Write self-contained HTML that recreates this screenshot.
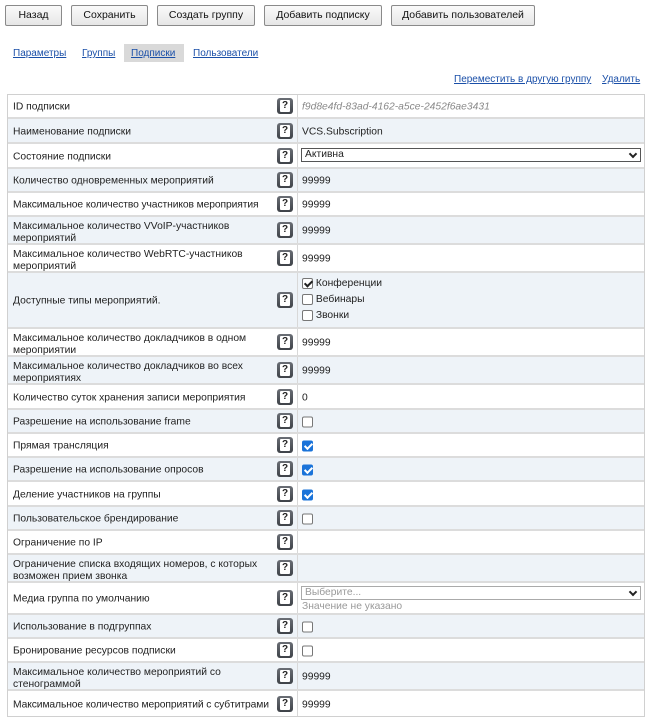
<!DOCTYPE html>
<html><head><meta charset="utf-8"><style>
*{box-sizing:border-box;margin:0;padding:0}
body{width:650px;height:723px;background:#fff;font-family:"Liberation Sans",sans-serif;font-size:10.3px;color:#222;position:relative;overflow:hidden}
.btn{position:absolute;top:5px;height:21px;border:1px solid #8a8a8a;border-radius:2px;background:linear-gradient(#fafafa,#e6e6e6);font-size:10.5px;text-align:center;line-height:19px;color:#111}
a{color:#1a4fa8;text-decoration:underline;position:absolute;font-size:10px}
.tab{top:48px}
.tbl{position:absolute;left:7px;top:94px;width:638px;border:1px solid #d0d0d0}
.r{position:relative;border-bottom:2px solid #dcdcdc}
.r:last-child{border-bottom:none}
.r.b{background:#eef3f8}
.l{position:absolute;left:5px;top:50%;transform:translateY(-38%);width:262px;line-height:12px;white-space:normal}
.q{position:absolute;left:269px;top:50%;margin-top:-8px;width:16px;height:16px;border-radius:3px;background:linear-gradient(#6a6e75,#3e4248);}
.q::after{content:"?";position:absolute;left:3px;top:2px;width:10px;height:12px;background:#fff;color:#222;font-weight:bold;font-size:10px;line-height:12px;text-align:center;border-radius:1px}
.d{position:absolute;left:289px;top:0;bottom:0;border-left:1px solid #d8d8d8}
.v{position:absolute;left:294px;top:50%;transform:translateY(-40%)}
.cb{display:inline-block;width:11px;height:11px;border:1px solid #777;border-radius:2px;background:#fff;vertical-align:middle;position:relative}
.cb.on{background:#1a73d9;border-color:#1a73d9}
.cb.on::after{content:"";position:absolute;left:3px;top:0px;width:3px;height:6px;border:solid #fff;border-width:0 2px 2px 0;transform:rotate(45deg)}
.cb.k::after{content:"";position:absolute;left:3px;top:0px;width:3px;height:6px;border:solid #222;border-width:0 2px 2px 0;transform:rotate(45deg)}
.sel{position:absolute;left:293px;width:340px;height:14px;border:1px solid #777;background:#fff;padding-left:3px;line-height:12px}
.sel::after{content:"";position:absolute;right:4px;top:2px;width:4px;height:4px;border:solid #222;border-width:0 2px 2px 0;transform:rotate(45deg)}
.nw{white-space:nowrap;letter-spacing:-0.1px}
</style></head><body>
<div class="btn" style="left:5px;width:57px">Назад</div>
<div class="btn" style="left:71px;width:77px">Сохранить</div>
<div class="btn" style="left:157px;width:98px">Создать группу</div>
<div class="btn" style="left:264px;width:118px">Добавить подписку</div>
<div class="btn" style="left:391px;width:144px">Добавить пользователей</div>
<div style="position:absolute;left:124px;top:44px;width:60px;height:18px;background:#d9d9d9"></div>
<a class="tab" style="left:13px">Параметры</a>
<a class="tab" style="left:82px">Группы</a>
<a class="tab" style="left:131px">Подписки</a>
<a class="tab" style="left:193px">Пользователи</a>
<a style="left:454px;top:74px">Переместить в другую группу</a>
<a style="left:602px;top:74px">Удалить</a>
<div class="tbl">
<div class="r" style="height:24px"><div class="l">ID подписки</div><div class="q"></div><div class="d"></div><div class="v" style="color:#888;font-style:italic">f9d8e4fd-83ad-4162-a5ce-2452f6ae3431</div></div>
<div class="r b" style="height:25px"><div class="l">Наименование подписки</div><div class="q"></div><div class="d"></div><div class="v">VCS.Subscription</div></div>
<div class="r" style="height:25px"><div class="l">Состояние подписки</div><div class="q"></div><div class="d"></div><div class="sel" style="top:4px;border-color:#555">Активна</div></div>
<div class="r b" style="height:24px"><div class="l">Количество одновременных мероприятий</div><div class="q"></div><div class="d"></div><div class="v">99999</div></div>
<div class="r" style="height:24px"><div class="l nw">Максимальное количество участников мероприятия</div><div class="q"></div><div class="d"></div><div class="v">99999</div></div>
<div class="r b" style="height:28px"><div class="l">Максимальное количество VVoIP-участников мероприятий</div><div class="q"></div><div class="d"></div><div class="v">99999</div></div>
<div class="r" style="height:28px"><div class="l">Максимальное количество WebRTC-участников мероприятий</div><div class="q"></div><div class="d"></div><div class="v">99999</div></div>
<div class="r b" style="height:56px"><div class="l">Доступные типы мероприятий.</div><div class="q"></div><div class="d"></div><div class="v" style="line-height:16px;transform:translateY(-50%)"><div><span class="cb k"></span> Конференции</div><div><span class="cb"></span> Вебинары</div><div><span class="cb"></span> Звонки</div></div></div>
<div class="r" style="height:28px"><div class="l">Максимальное количество докладчиков в одном мероприятии</div><div class="q"></div><div class="d"></div><div class="v">99999</div></div>
<div class="r b" style="height:28px"><div class="l">Максимальное количество докладчиков во всех мероприятиях</div><div class="q"></div><div class="d"></div><div class="v">99999</div></div>
<div class="r" style="height:25px"><div class="l">Количество суток хранения записи мероприятия</div><div class="q"></div><div class="d"></div><div class="v">0</div></div>
<div class="r b" style="height:24px"><div class="l">Разрешение на использование frame</div><div class="q"></div><div class="d"></div><div class="v"><span class="cb"></span></div></div>
<div class="r" style="height:24px"><div class="l">Прямая трансляция</div><div class="q"></div><div class="d"></div><div class="v"><span class="cb on"></span></div></div>
<div class="r b" style="height:24px"><div class="l">Разрешение на использование опросов</div><div class="q"></div><div class="d"></div><div class="v"><span class="cb on"></span></div></div>
<div class="r" style="height:25px"><div class="l">Деление участников на группы</div><div class="q"></div><div class="d"></div><div class="v"><span class="cb on"></span></div></div>
<div class="r b" style="height:24px"><div class="l">Пользовательское брендирование</div><div class="q"></div><div class="d"></div><div class="v"><span class="cb"></span></div></div>
<div class="r" style="height:24px"><div class="l">Ограничение по IP</div><div class="q"></div><div class="d"></div></div>
<div class="r b" style="height:28px"><div class="l">Ограничение списка входящих номеров, с которых возможен прием звонка</div><div class="q"></div><div class="d"></div></div>
<div class="r" style="height:32px"><div class="l">Медиа группа по умолчанию</div><div class="q"></div><div class="d"></div><div class="sel" style="top:3px;color:#999;border-color:#aaa">Выберите...</div><div style="position:absolute;left:294px;top:18px;color:#999">Значение не указано</div></div>
<div class="r b" style="height:24px"><div class="l">Использование в подгруппах</div><div class="q"></div><div class="d"></div><div class="v"><span class="cb"></span></div></div>
<div class="r" style="height:24px"><div class="l">Бронирование ресурсов подписки</div><div class="q"></div><div class="d"></div><div class="v"><span class="cb"></span></div></div>
<div class="r b" style="height:28px"><div class="l">Максимальное количество мероприятий со стенограммой</div><div class="q"></div><div class="d"></div><div class="v">99999</div></div>
<div class="r" style="height:25px"><div class="l nw">Максимальное количество мероприятий с субтитрами</div><div class="q"></div><div class="d"></div><div class="v">99999</div></div>
</div>
</body></html>
